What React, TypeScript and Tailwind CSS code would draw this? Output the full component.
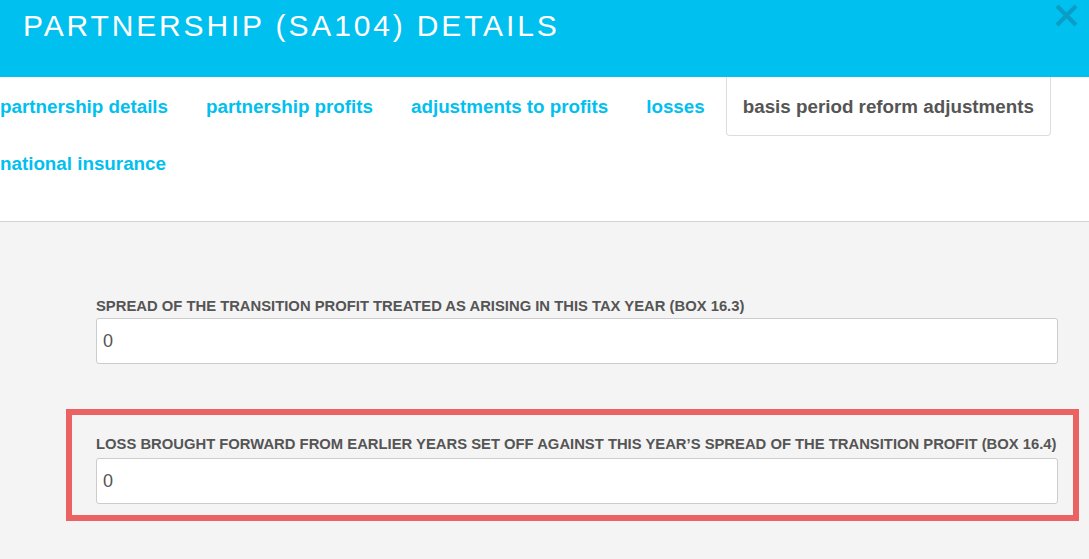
import React from "react";

const tabs = [
  { label: "partnership details" },
  { label: "partnership profits" },
  { label: "adjustments to profits" },
  { label: "losses" },
  { label: "basis period reform adjustments", active: true },
  { label: "national insurance" },
];

export default function App() {
  return (
    <div
      className="w-full min-h-[559px] bg-[#f4f4f4] flex flex-col"
      style={{ fontFamily: '"Liberation Sans", Arial, sans-serif' }}
    >
      <header className="relative h-[77px] bg-[#00c0ef] pl-[23px] pt-[11px]">
        <h1 className="text-[30px] leading-none tracking-[2.85px] text-white font-normal">
          PARTNERSHIP (SA104) DETAILS
        </h1>
        <button className="absolute right-[11px] top-[4px] w-[23px] h-[23px]" aria-label="close">
          <svg viewBox="0 0 23 23" width="23" height="23">
            <path d="M2 2 L21 21 M21 2 L2 21" stroke="#0a9dc5" strokeWidth="4.2" strokeLinecap="butt" />
          </svg>
        </button>
      </header>

      <nav className="bg-white border-b border-[#d2d2d2] pt-[2px] pb-[28px]">
        <ul className="flex flex-wrap ml-[-17px]">
          {tabs.map((t) => (
            <li
              key={t.label}
              className={
                t.active
                  ? "h-[59px] mt-[-2px] mr-[4px] px-[16px] pt-[2px] flex items-center text-[18.8px] font-bold text-[#555555] bg-white border border-t-0 border-[#dddddd] rounded-b-[4px]"
                  : "h-[57px] mr-[4px] px-[17px] flex items-center text-[18.8px] font-bold text-[#00c0ef]"
              }
            >
              {t.label}
            </li>
          ))}
        </ul>
      </nav>

      <main className="flex-1 pl-[96px] pr-[31px] pt-[76px]">
        <div>
          <label className="block whitespace-nowrap text-[14.8px] leading-[17px] font-bold text-[#555555] mb-[3px]">
            SPREAD OF THE TRANSITION PROFIT TREATED AS ARISING IN THIS TAX YEAR (BOX 16.3)
          </label>
          <div className="h-[46px] bg-white border border-[#cccccc] rounded-[3px] pl-[6px] flex items-center text-[18px] text-[#555555]">
            0
          </div>
        </div>

        <div className="mt-[45px] ml-[-30px] mr-[-21px] border-[6px] border-[#ec6161] pl-[24px] pr-[15px] pt-[21px] pb-[11px]">
          <label className="block whitespace-nowrap text-[14.8px] leading-[17px] font-bold text-[#555555] mb-[5px]">
            LOSS BROUGHT FORWARD FROM EARLIER YEARS SET OFF AGAINST THIS YEAR’S SPREAD OF THE TRANSITION PROFIT (BOX 16.4)
          </label>
          <div className="h-[46px] bg-white border border-[#cccccc] rounded-[3px] pl-[6px] flex items-center text-[18px] text-[#555555]">
            0
          </div>
        </div>
      </main>
    </div>
  );
}
